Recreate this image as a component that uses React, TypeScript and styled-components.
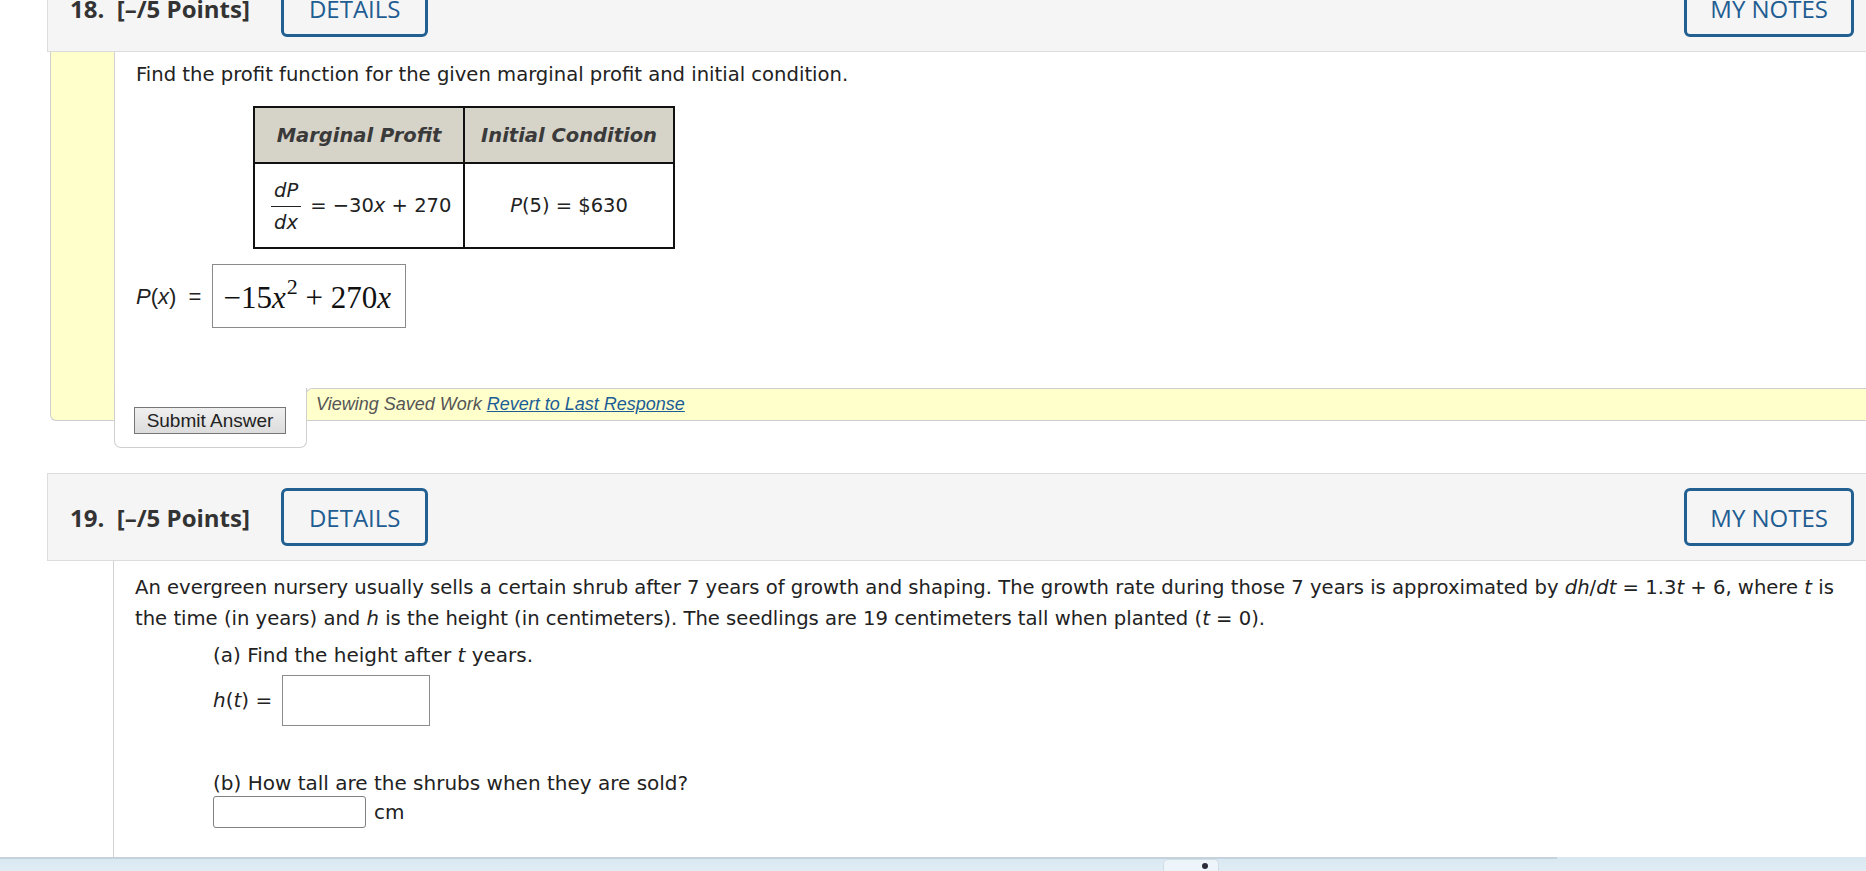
import React from "react";
import styled, { createGlobalStyle } from "styled-components";

const GlobalStyle = createGlobalStyle`
  html, body { margin: 0; padding: 0; background: #fff; overflow: hidden; }
  #root { width: 1866px; height: 871px; }
  * { box-sizing: border-box; }
`;

const Screen = styled.div`
  width: 1866px;
  height: 871px;
  display: grid;
  grid-template-rows: 1fr 14px;
  grid-template-columns: 1866px;
  overflow: hidden;
  background: #fff;
`;

const Viewport = styled.div`
  overflow: hidden;
  min-height: 0;
`;

const Scroller = styled.div`
  margin-top: -36px;
  height: calc(100% + 36px);
  display: flex;
  flex-direction: column;
`;

const Question = styled.section<{ $gap?: number; $fill?: boolean }>`
  margin: ${(p) => p.$gap ?? 0}px -1px 0 47px;
  display: flex;
  flex-direction: column;
  flex: ${(p) => (p.$fill ? "1" : "0 0 auto")};
`;

const Header = styled.header`
  flex: 0 0 88px;
  height: 88px;
  background: #f5f5f5;
  border: 1px solid #dcdcdc;
  display: flex;
  align-items: center;
  padding: 0 12px 0 22px;
  font-family: "Open Sans", "Liberation Sans", sans-serif;
`;

const Points = styled.span`
  font-size: 24px;
  font-weight: 700;
  color: #333;
  white-space: pre;
  margin-right: 31px;
`;

const HeaderButton = styled.button<{ $push?: boolean }>`
  height: 58px;
  padding: 0 ${(p) => (p.$push ? 23 : 25)}px;
  border: 3px solid #236092;
  border-radius: 6px;
  background: transparent;
  color: #1f5d92;
  font-family: "Open Sans", "Liberation Sans", sans-serif;
  font-size: 24px;
  font-weight: 500;
  margin-left: ${(p) => (p.$push ? "auto" : "0")};
  cursor: pointer;
`;

const Body = styled.div<{ $inset: number }>`
  display: flex;
  flex: 1;
  margin-left: ${(p) => p.$inset}px;
`;

const Gutter = styled.div<{ $highlight?: boolean }>`
  flex: 0 0 ${(p) => (p.$highlight ? 64 : 66)}px;
  background: ${(p) => (p.$highlight ? "#ffffcc" : "transparent")};
  border-left: ${(p) => (p.$highlight ? "1px solid #cfcfcf" : "none")};
  border-bottom: ${(p) => (p.$highlight ? "1px solid #cfcfcf" : "none")};
  border-bottom-left-radius: 6px;
`;

const Main = styled.div`
  flex: 1;
  min-width: 0;
  border-left: 1px solid #d2d2d2;
  display: flex;
  flex-direction: column;
`;

const Content = styled.div<{ $top: number }>`
  padding: ${(p) => p.$top}px 0 0 21px;
  font-family: "DejaVu Sans", Verdana, sans-serif;
  font-size: 20px;
  line-height: 31px;
  color: #222;
`;

const Para = styled.p`
  margin: 0;
  font-size: 19.6px;
`;

const Table = styled.table`
  border-collapse: collapse;
  table-layout: fixed;
  width: 422px;
  margin: 16px 0 0 117px;
  font-size: 19.5px;
`;

const Th = styled.th`
  height: 56px;
  background: #d6d3c8;
  border: 2px solid #111;
  font-weight: 700;
  font-style: italic;
  color: #3a3a3a;
  text-align: center;
  padding: 0;
`;

const Td = styled.td<{ $align?: string }>`
  height: 85px;
  border: 2px solid #111;
  text-align: ${(p) => p.$align ?? "left"};
  padding: 0 0 0 ${(p) => (p.$align === "center" ? 0 : 16)}px;
  vertical-align: middle;
`;

const Equation = styled.span`
  display: inline-flex;
  align-items: center;
  white-space: nowrap;
`;

const Fraction = styled.span`
  display: inline-flex;
  flex-direction: column;
  align-items: center;
  line-height: 31px;
  margin-right: 9px;
  padding: 2px 0 0;
`;

const FracTerm = styled.i`
  padding: 0 3px;
`;

const FracBar = styled.span`
  align-self: stretch;
  height: 1px;
  background: #222;
`;

const AnswerRow = styled.div`
  display: flex;
  align-items: center;
  gap: 11px;
  margin-top: 15px;
`;

const SansLabel = styled.span`
  font-family: "Liberation Sans", Arial, sans-serif;
  font-size: 22px;
  color: #222;
  white-space: pre;
`;

const MathBox = styled.div`
  width: 194px;
  height: 64px;
  border: 1px solid #8a8a8a;
  display: flex;
  align-items: center;
  padding: 4px 0 0 10px;
  font-family: "Liberation Serif", "DejaVu Serif", serif;
  font-size: 31px;
  color: #111;
  white-space: nowrap;
`;

const MathExpr = styled.span`
  line-height: 40px;
`;

const Sup = styled.sup`
  font-size: 22px;
  vertical-align: 14px;
  line-height: 0;
  margin-left: 1px;
`;

const Footer = styled.div`
  display: flex;
  align-items: flex-start;
  margin-top: 60px;
`;

const SubmitTab = styled.div`
  flex: 0 0 193px;
  height: 60px;
  margin: 0 0 -27px -1px;
  border: 1px solid #cfcfcf;
  border-top: none;
  border-radius: 0 0 7px 7px;
  background: #fff;
  display: flex;
  align-items: flex-end;
  padding: 0 0 13px 19px;
  position: relative;
  z-index: 1;
`;

const SubmitButton = styled.button`
  width: 152px;
  height: 27px;
  padding: 0;
  border: 1px solid #767676;
  background: linear-gradient(#efefef, #dcdcdc);
  font-family: "Liberation Sans", Arial, sans-serif;
  font-size: 19px;
  color: #222;
`;

const ViewingBar = styled.div`
  flex: 1;
  height: 33px;
  margin-left: -1px;
  background: #ffffcc;
  border: 1px solid #cfcfcf;
  border-right: none;
  border-top-left-radius: 6px;
  display: flex;
  align-items: center;
  padding-left: 9px;
  font-family: "Liberation Sans", Arial, sans-serif;
  font-size: 18px;
  font-style: italic;
  color: #555;
  position: relative;
  z-index: 2;
`;

const RevertLink = styled.a`
  color: #1c5d96;
  text-decoration: underline;
  margin-left: 5px;
  cursor: pointer;
`;

const Part = styled.div`
  margin-left: 78px;
`;

const PartLine = styled.div<{ $mt?: number; $lh?: number }>`
  margin-top: ${(p) => p.$mt ?? 0}px;
  line-height: ${(p) => p.$lh ?? 31}px;
`;

const FieldRow = styled.div<{ $mt?: number }>`
  display: flex;
  align-items: center;
  gap: 10px;
  margin-top: ${(p) => p.$mt ?? 0}px;
`;

const BigInput = styled.input`
  width: 148px;
  height: 51px;
  border: 1px solid #8c8c8c;
  border-radius: 0;
  background: #fff;
`;

const SmallInput = styled.input`
  width: 153px;
  height: 32px;
  border: 1px solid #808080;
  border-radius: 3px;
  background: #fff;
`;

const Unit = styled.span`
  margin-left: -2px;
`;

const Taskbar = styled.footer`
  background: linear-gradient(#d8e7f1, #e0edf5);
  display: flex;
  flex-direction: column;
`;

const ScrollTrack = styled.div`
  width: 1557px;
  height: 2px;
  background: #c6d2db;
`;

const TaskIcon = styled.div`
  width: 56px;
  height: 12px;
  margin: 0 0 0 1163px;
  border-radius: 5px 5px 0 0;
  background: #eef5fa;
  border: 1px solid #cfdde6;
  border-bottom: none;
  display: flex;
  justify-content: flex-end;
  padding: 3px 10px 0 0;
`;

const TaskDot = styled.span`
  width: 6px;
  height: 6px;
  border-radius: 50%;
  background: #2b2b3a;
`;

export default function App() {
  return (
    <>
      <GlobalStyle />
      <Screen>
        <Viewport>
          <Scroller>
            <Question>
              <Header>
                <Points>{"18.  [–/5 Points]"}</Points>
                <HeaderButton>DETAILS</HeaderButton>
                <HeaderButton $push>MY NOTES</HeaderButton>
              </Header>
              <Body $inset={3}>
                <Gutter $highlight />
                <Main>
                  <Content $top={7}>
                    <Para>
                      Find the profit function for the given marginal profit and initial condition.
                    </Para>
                    <Table>
                      <thead>
                        <tr>
                          <Th>Marginal Profit</Th>
                          <Th>Initial Condition</Th>
                        </tr>
                      </thead>
                      <tbody>
                        <tr>
                          <Td>
                            <Equation>
                              <Fraction>
                                <FracTerm>dP</FracTerm>
                                <FracBar />
                                <FracTerm>dx</FracTerm>
                              </Fraction>
                              = −30<i>x</i>&nbsp;+ 270
                            </Equation>
                          </Td>
                          <Td $align="center">
                            <i>P</i>(5) = $630
                          </Td>
                        </tr>
                      </tbody>
                    </Table>
                    <AnswerRow>
                      <SansLabel>
                        <i>P</i>(<i>x</i>)  =
                      </SansLabel>
                      <MathBox>
                        <MathExpr>
                          −15<i>x</i>
                          <Sup>2</Sup>&nbsp;+ 270<i>x</i>
                        </MathExpr>
                      </MathBox>
                    </AnswerRow>
                  </Content>
                  <Footer>
                    <SubmitTab>
                      <SubmitButton>Submit Answer</SubmitButton>
                    </SubmitTab>
                    <ViewingBar>
                      Viewing Saved Work
                      <RevertLink>Revert to Last Response</RevertLink>
                    </ViewingBar>
                  </Footer>
                </Main>
              </Body>
            </Question>

            <Question $gap={52} $fill>
              <Header>
                <Points>{"19.  [–/5 Points]"}</Points>
                <HeaderButton>DETAILS</HeaderButton>
                <HeaderButton $push>MY NOTES</HeaderButton>
              </Header>
              <Body $inset={0}>
                <Gutter />
                <Main>
                  <Content $top={11}>
                    <Para>
                      An evergreen nursery usually sells a certain shrub after 7 years of growth and
                      shaping. The growth rate during those 7 years is approximated by <i>dh</i>/<i>dt</i> = 1.3<i>t</i> + 6,
                      where <i>t</i> is the time (in years) and <i>h</i> is the height (in centimeters). The
                      seedlings are 19 centimeters tall when planted (<i>t</i> = 0).
                    </Para>
                    <Part>
                      <PartLine $mt={6}>
                        (a) Find the height after <i>t</i> years.
                      </PartLine>
                      <FieldRow $mt={4}>
                        <span>
                          <i>h</i>(<i>t</i>) =
                        </span>
                        <BigInput />
                      </FieldRow>
                      <PartLine $mt={44} $lh={26}>
                        (b) How tall are the shrubs when they are sold?
                      </PartLine>
                      <FieldRow>
                        <SmallInput />
                        <Unit>cm</Unit>
                      </FieldRow>
                    </Part>
                  </Content>
                </Main>
              </Body>
            </Question>
          </Scroller>
        </Viewport>
        <Taskbar>
          <ScrollTrack />
          <TaskIcon>
            <TaskDot />
          </TaskIcon>
        </Taskbar>
      </Screen>
    </>
  );
}
